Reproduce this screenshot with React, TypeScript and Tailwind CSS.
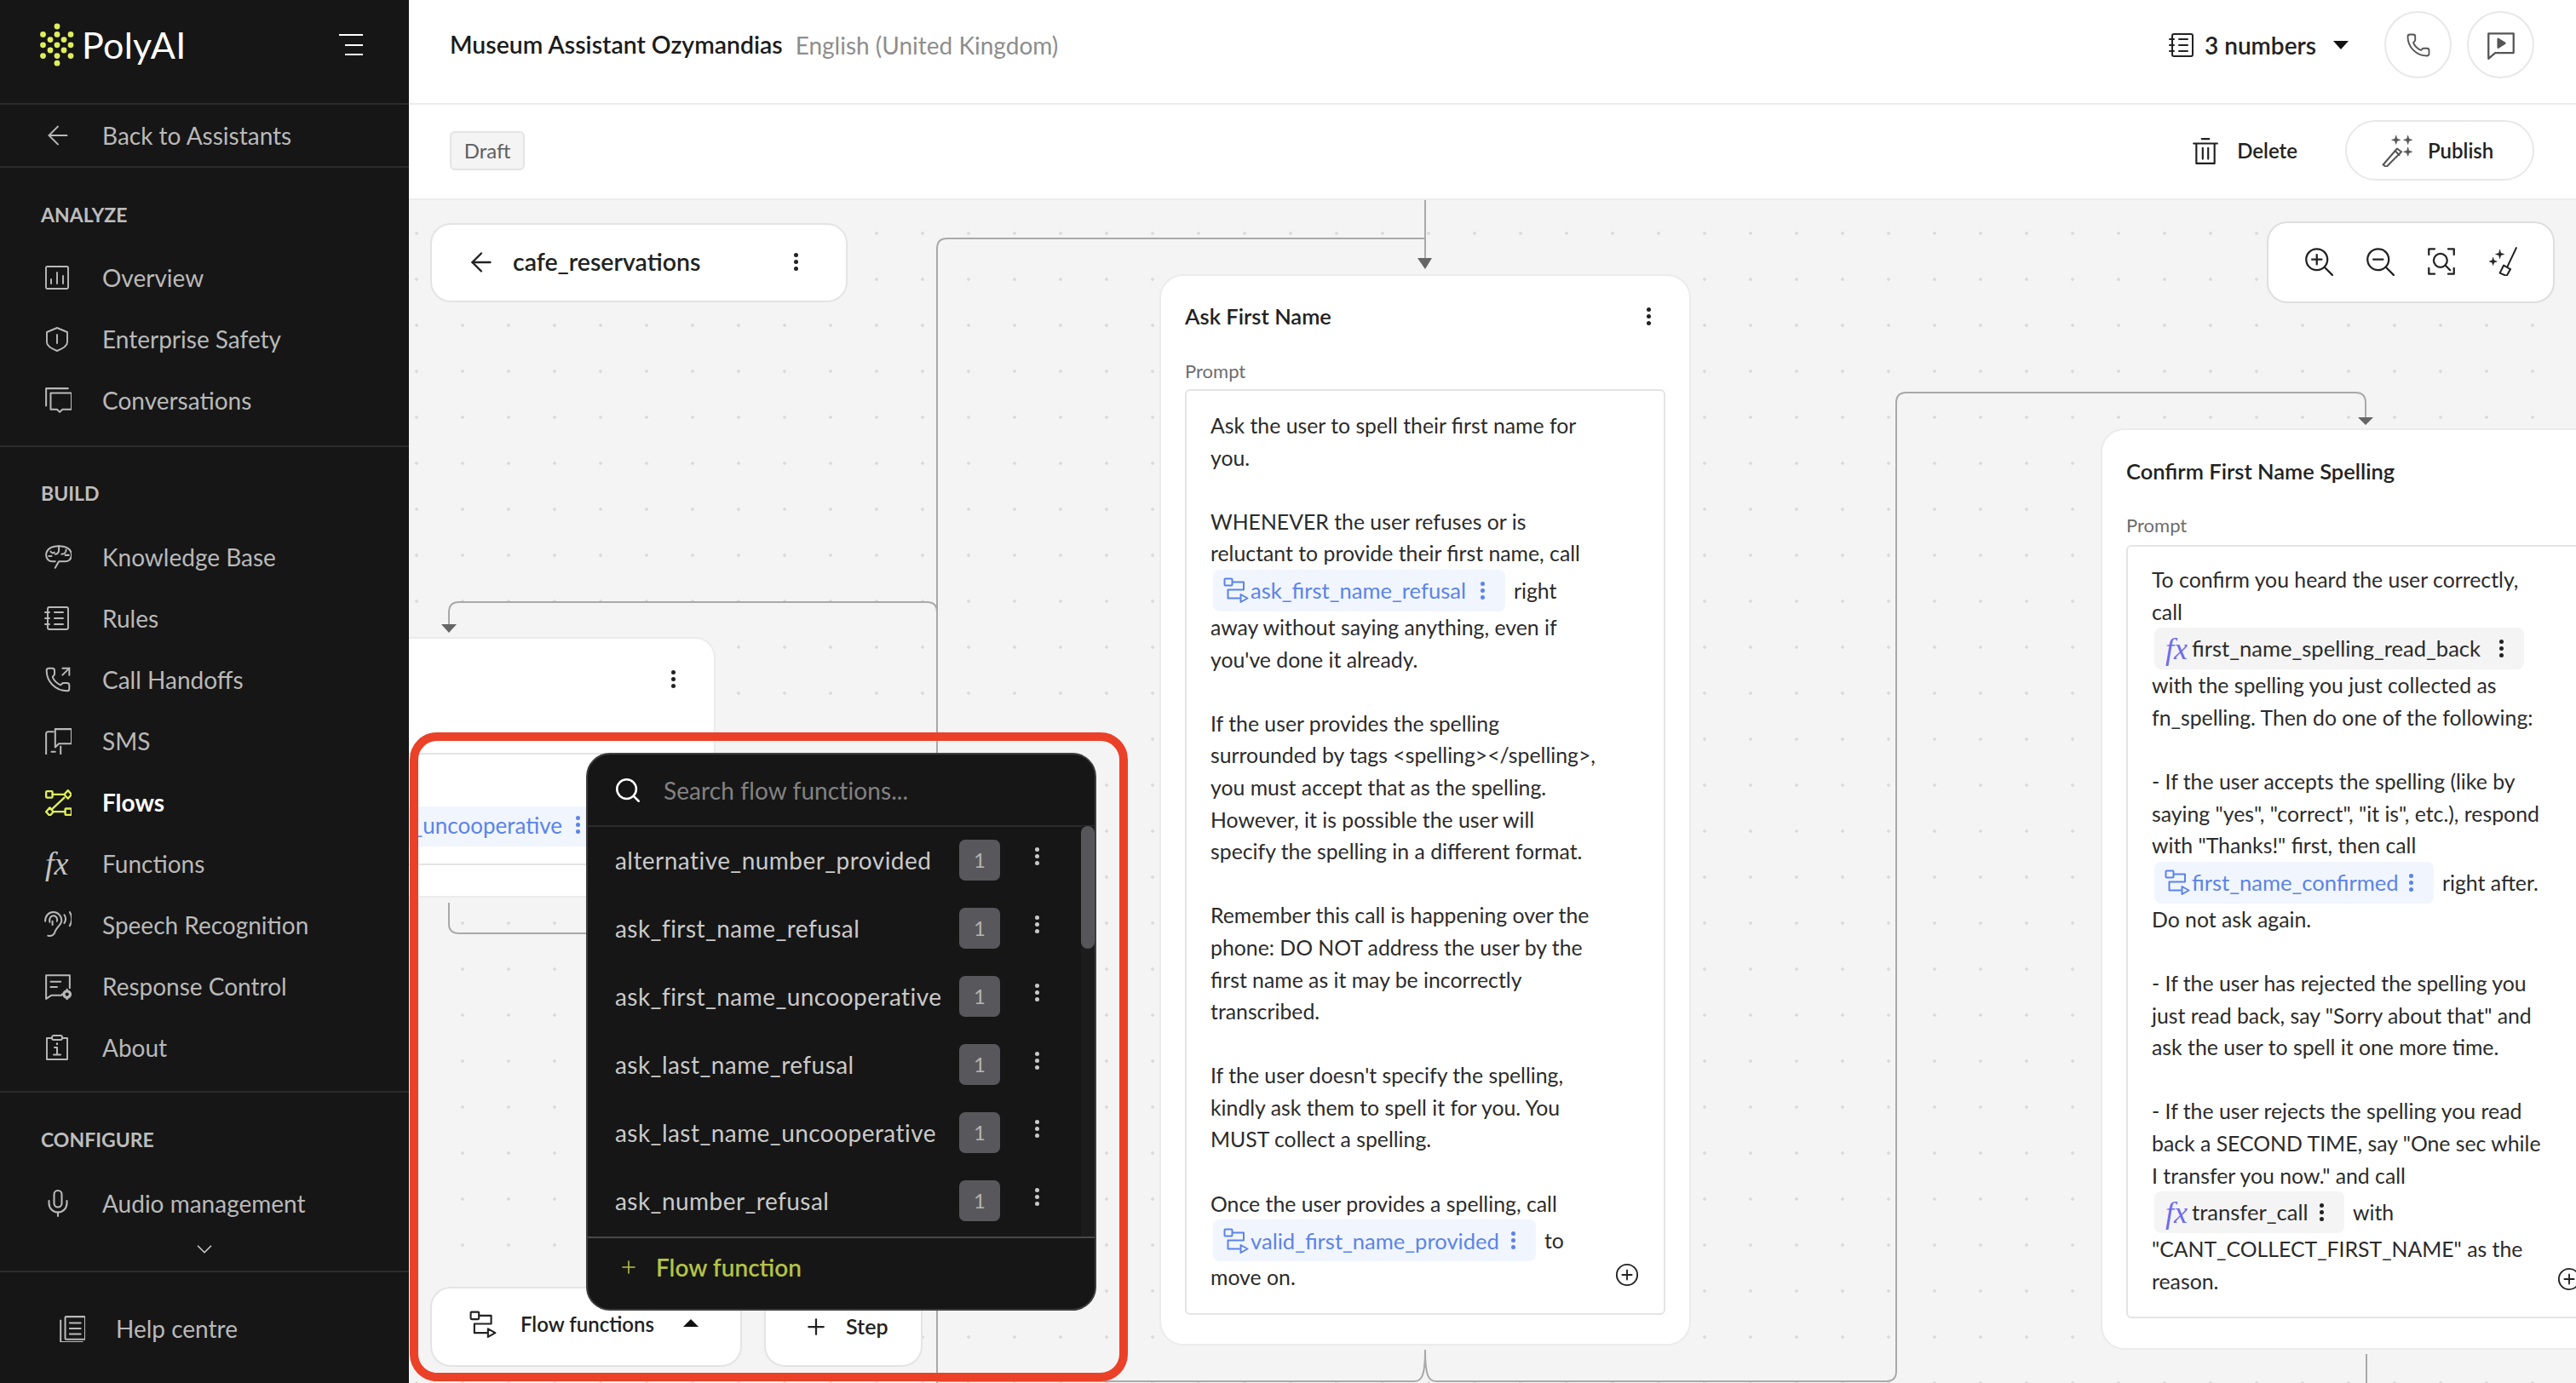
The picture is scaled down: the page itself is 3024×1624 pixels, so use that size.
import { ArrowLeft, ChevronDown, Mic, PhoneOutgoing, Phone, Plus, Search } from "lucide-react";
import type { ReactNode } from "react";

type Pill = { kind: "flow" | "fx"; label: string; after?: string; width: string };
type Line = string | Pill;

const askLines: Line[] = [
  "Ask the user to spell their first name for",
  "you.",
  "",
  "WHENEVER the user refuses or is",
  "reluctant to provide their first name, call",
  { kind: "flow", label: "ask_first_name_refusal", after: "right", width: "w-[343px]" },
  "away without saying anything, even if",
  "you've done it already.",
  "",
  "If the user provides the spelling",
  "surrounded by tags <spelling></spelling>,",
  "you must accept that as the spelling.",
  "However, it is possible the user will",
  "specify the spelling in a different format.",
  "",
  "Remember this call is happening over the",
  "phone: DO NOT address the user by the",
  "first name as it may be incorrectly",
  "transcribed.",
  "",
  "If the user doesn't specify the spelling,",
  "kindly ask them to spell it for you. You",
  "MUST collect a spelling.",
  "",
  "Once the user provides a spelling, call",
  { kind: "flow", label: "valid_first_name_provided", after: "to", width: "w-[379px]" },
  "move on.",
];

const confirmLines: Line[] = [
  "To confirm you heard the user correctly,",
  "call",
  { kind: "fx", label: "first_name_spelling_read_back", width: "w-[434px]" },
  "with the spelling you just collected as",
  "fn_spelling. Then do one of the following:",
  "",
  "- If the user accepts the spelling (like by",
  'saying "yes", "correct", "it is", etc.), respond',
  'with "Thanks!" first, then call',
  { kind: "flow", label: "first_name_confirmed", after: "right after.", width: "w-[328px]" },
  "Do not ask again.",
  "",
  "- If the user has rejected the spelling you",
  'just read back, say "Sorry about that" and',
  "ask the user to spell it one more time.",
  "",
  "- If the user rejects the spelling you read",
  'back a SECOND TIME, say "One sec while',
  'I transfer you now." and call',
  { kind: "fx", label: "transfer_call", after: "with", width: "w-[223px]" },
  '"CANT_COLLECT_FIRST_NAME" as the',
  "reason.",
];

const flowFunctions = [
  "alternative_number_provided",
  "ask_first_name_refusal",
  "ask_first_name_uncooperative",
  "ask_last_name_refusal",
  "ask_last_name_uncooperative",
  "ask_number_refusal",
];

function Svg({ size = 30, sw = 1.9, className, children }: { size?: number; sw?: number; className?: string; children: ReactNode }) {
  return (
    <svg width={size} height={size} viewBox="0 0 30 30" fill="none" stroke="currentColor" strokeWidth={sw} strokeLinecap="round" strokeLinejoin="round" className={className}>
      {children}
    </svg>
  );
}

function Dots({ className }: { className?: string }) {
  return (
    <span className={`flex flex-col gap-[3px] items-center ${className ?? ""}`}>
      <i className="block w-[5px] h-[5px] rounded-full bg-current" />
      <i className="block w-[5px] h-[5px] rounded-full bg-current" />
      <i className="block w-[5px] h-[5px] rounded-full bg-current" />
    </span>
  );
}

function FlowIcon({ size = 30, sw = 2 }: { size?: number; sw?: number }) {
  return (
    <Svg size={size} sw={sw}>
      <rect x="1.5" y="1.5" width="9" height="8" rx="1" />
      <path d="M11 5.5H24V14.5H5.5V24.5H19" />
      <path d="M20.5 20L28.5 24.5L20.5 29Z" />
    </Svg>
  );
}

function FxGlyph({ className }: { className: string }) {
  return <span className={`font-['Liberation_Serif',serif] italic ${className}`}>fx</span>;
}

const I = {
  overview: (
    <Svg>
      <rect x="2" y="2" width="26" height="26" rx="1.5" />
      <path d="M8 22v-5M15 22V9M22 22V13" />
    </Svg>
  ),
  shield: (
    <Svg>
      <path d="M15 2L27 7V19C27 23 20 27 15 29C10 27 3 23 3 19V7Z" />
      <path d="M15 10V20" />
    </Svg>
  ),
  chats: (
    <Svg size={32}>
      <path d="M2 21V2H26" />
      <path d="M7 7H30V25H20L17 28L14 25H7Z" />
    </Svg>
  ),
  brain: (
    <Svg size={32}>
      <path d="M12 27L16 20H23C27 20 30 17 30 13C30 7 25 3 16 3C7 3 2 7 2 13C2 17 5 20 9 20H12" />
      <path d="M7 9C8 11 10 11 11 10M16 3V8C16 10 14 12 12 12M24 7C24 10 22 12 19 12M5 14H8M27 13H23" />
    </Svg>
  ),
  rules: (
    <Svg>
      <rect x="4" y="2" width="24" height="26" rx="2" />
      <path d="M1 8H6M1 15H6M1 22H6M12 8H22M12 15H22M12 22H22" />
    </Svg>
  ),
  sms: (
    <Svg size={32}>
      <path d="M10 5H4C3 5 2 6 2 7V30C2 31 3 32 4 32H16C17 32 18 31 18 30V21" />
      <path d="M12 2H30V18H16L12 22Z" />
      <path d="M8 27H12" />
    </Svg>
  ),
  flows: (
    <Svg size={32} sw={2.2}>
      <rect x="2" y="3" width="7" height="7" rx="1" />
      <path d="M9 6.5H22M22 10L8 23" />
      <path d="M26 2L30 6.5L26 11L22 6.5Z" />
      <path d="M6 21L10 25.5L6 30L2 25.5Z" />
      <path d="M10 25.5H23" />
      <rect x="23" y="22" width="7" height="7" rx="1" />
    </Svg>
  ),
  ear: (
    <Svg size={32}>
      <path d="M1 11C1 5 5 1 10 1C15 1 19 5 19 10C19 15 14 17 12 22C11 26 8 28 4 27" />
      <path d="M6 12C5 8 7 5 10 5C13 5 15 8 14 11M9 11V15" />
      <path d="M22 4C24 7 24 10 22 13M28 1C31 6 31 11 28 16" />
    </Svg>
  ),
  response: (
    <Svg size={32}>
      <path d="M2 3H28V17M19 25H8L2 29V3" />
      <path d="M7 10H18M7 16H14" />
      <circle cx="25" cy="24" r="3.5" strokeWidth="3" />
      <path d="M25 18.5V20M25 28V29.5M19.5 24H21M29 24H30.5" strokeWidth="2" />
    </Svg>
  ),
  about: (
    <Svg>
      <path d="M9 4H3V29H27V4H21" />
      <rect x="9" y="1" width="12" height="5" rx="2" />
      <path d="M12 15H15V23M11 23.5H19" strokeWidth="2" />
      <path d="M15 10.5V11" strokeWidth="2.4" />
    </Svg>
  ),
  help: (
    <Svg size={32}>
      <path d="M3 6V30H27" />
      <rect x="8" y="2" width="22" height="25" rx="1" />
      <path d="M13 9H25M13 15H25M13 21H25" />
    </Svg>
  ),
};

function NavRow({ icon, label, active }: { icon: ReactNode; label: string; active?: boolean }) {
  return (
    <div className={`h-[72px] flex items-center pl-[52px] ${active ? "text-white font-bold" : "text-[#b9b9b9]"}`}>
      <span className={`w-[68px] flex items-center shrink-0 ${active ? "text-[#dfee5b]" : ""}`}>{icon}</span>
      <span className="text-[28px]">{label}</span>
    </div>
  );
}

function SectionLabel({ children }: { children: ReactNode }) {
  return <div className="pl-[48px] h-[30px] leading-[30px] text-[23px] font-bold text-[#bdbdbd]">{children}</div>;
}

function Sidebar() {
  const logoDots = [
    [20, 4], [20, 13.4], [12, 19.6], [28, 19.6], [3.5, 13.4], [36, 13.4], [3.5, 25.8], [20, 25.8], [36, 25.8],
    [12, 32], [28, 32], [3.5, 38.6], [20, 38.6], [36, 38.6], [20, 47.2],
  ];
  return (
    <aside className="w-[480px] shrink-0 h-full bg-[#161616] flex flex-col">
      <div className="h-[123px] border-b-2 border-[#2b2b2b] flex items-center pl-[47px] pr-[54px] pb-[16px]">
        <svg width="40" height="52" viewBox="0 0 40 52">
          {logoDots.map(([x, y]) => (
            <circle key={`${x}-${y}`} cx={x} cy={y} r="3.4" fill="#dfee5b" />
          ))}
        </svg>
        <span className="ml-[9px] text-[43px] leading-none text-white tracking-[0.3px]">PolyAI</span>
        <svg width="28" height="26" viewBox="0 0 28 26" className="ml-auto" stroke="#fff" strokeWidth="2">
          <path d="M0 1H28M7 13H28M7 24H28" />
        </svg>
      </div>
      <div className="h-[74px] border-b-2 border-[#2b2b2b] flex items-center pl-[50px] text-[#b9b9b9]">
        <span className="w-[70px]"><ArrowLeft size={36} strokeWidth={1.2} /></span>
        <span className="text-[28px]">Back to Assistants</span>
      </div>
      <div className="pt-[40px] pb-[17px] border-b-2 border-[#2b2b2b]">
        <SectionLabel>ANALYZE</SectionLabel>
        <div className="mt-[23px]">
          <NavRow icon={I.overview} label="Overview" />
          <NavRow icon={I.shield} label="Enterprise Safety" />
          <NavRow icon={I.chats} label="Conversations" />
        </div>
      </div>
      <div className="pt-[39px] pb-[15px] border-b-2 border-[#2b2b2b]">
        <SectionLabel>BUILD</SectionLabel>
        <div className="mt-[24px]">
          <NavRow icon={I.brain} label="Knowledge Base" />
          <NavRow icon={I.rules} label="Rules" />
          <NavRow icon={<PhoneOutgoing size={32} strokeWidth={1.5} />} label="Call Handoffs" />
          <NavRow icon={I.sms} label="SMS" />
          <NavRow icon={I.flows} label="Flows" active />
          <NavRow icon={<FxGlyph className="text-[38px] leading-none text-[#c4c4c4] pl-[1px]" />} label="Functions" />
          <NavRow icon={I.ear} label="Speech Recognition" />
          <NavRow icon={I.response} label="Response Control" />
          <NavRow icon={I.about} label="About" />
        </div>
      </div>
      <div className="pt-[40px] border-b-2 border-[#2b2b2b]">
        <SectionLabel>CONFIGURE</SectionLabel>
        <div className="mt-[24px]">
          <NavRow icon={<Mic size={36} strokeWidth={1.4} className="-ml-[2px]" />} label="Audio management" />
        </div>
        <div className="h-[43px] flex justify-center items-start pt-[3px] text-[#c4c4c4]">
          <ChevronDown size={30} strokeWidth={1.4} />
        </div>
      </div>
      <div className="flex-1 flex items-center pl-[68px] pt-[2px] text-[#b9b9b9]">
        <span className="w-[68px]">{I.help}</span>
        <span className="text-[28px]">Help centre</span>
      </div>
    </aside>
  );
}

function TopBars() {
  return (
    <>
      <div className="h-[123px] border-b-2 border-[#ececec] bg-white flex items-center pl-[48px] pr-[49px] pb-[16px] shrink-0">
        <span className="text-[28.4px] font-semibold text-[#1c1c1c]">Museum Assistant Ozymandias</span>
        <span className="ml-[15px] text-[28px] text-[#8d8d8d]">English (United Kingdom)</span>
        <span className="ml-auto text-[#222]"><Svg size={30} sw={2}><rect x="4" y="2" width="24" height="26" rx="2" /><path d="M1 8H6M1 15H6M1 22H6M12 8H22M12 15H22M12 22H22" /></Svg></span>
        <span className="ml-[12px] text-[28px] font-semibold text-[#222]">3 numbers</span>
        <span className="ml-[20px] w-0 h-0 border-x-[9px] border-x-transparent border-t-[10px] border-t-[#111]" />
        <span className="ml-[42px] w-[79px] h-[79px] rounded-full border-2 border-[#e8e8e8] flex items-center justify-center text-[#555]"><Phone size={30} strokeWidth={1.5} /></span>
        <span className="ml-[18px] w-[79px] h-[79px] rounded-full border-2 border-[#e8e8e8] flex items-center justify-center text-[#555]">
          <Svg size={34} sw={2}>
            <path d="M2 3H28V23H9L2 29Z" />
            <path d="M12 8.5L19 13L12 17.5Z" fill="currentColor" />
          </Svg>
        </span>
      </div>
      <div className="h-[112px] border-b-2 border-[#ececec] bg-white flex items-center pl-[48px] pr-[49px] pb-[3px] shrink-0">
        <span className="h-[46px] w-[88px] rounded-[6px] border-2 border-[#e4e4e4] bg-[#f4f4f4] flex items-center justify-center text-[24px] text-[#5f5f5f]">Draft</span>
        <span className="ml-auto text-[#1f1f1f]">
          <Svg size={32} sw={2}>
            <path d="M2 7H28M11 2H19M5 7V29H25V7M12 12V24M18 12V24" />
          </Svg>
        </span>
        <span className="ml-[21px] text-[24px] font-semibold text-[#222]">Delete</span>
        <span className="ml-[56px] w-[222px] h-[71px] rounded-full border-2 border-[#e8e8e8] flex items-center pl-[40px] text-[#222]">
          <Svg size={38} sw={1.6} className="text-[#555]">
            <path d="M2 28L15 13L19 16L5 30Z" />
            <path d="M13 15L17 19" />
            <path d="M14 1L15 4L18 5L15 6L14 9L13 6L10 5L13 4ZM25 1L26 4L29 5L26 6L25 9L24 6L21 5L24 4ZM25 12L26 15L29 16L26 17L25 20L24 17L21 16L24 15Z" fill="currentColor" strokeWidth="0.5" />
          </Svg>
          <span className="ml-[17px] text-[24px] font-semibold">Publish</span>
        </span>
      </div>
    </>
  );
}

function PromptPill({ pill }: { pill: Pill }) {
  const isFlow = pill.kind === "flow";
  return (
    <span className={`${pill.width} shrink-0 ml-[3px] h-[49px] rounded-[8px] pl-[12px] flex items-center ${isFlow ? "bg-[#f1f5fe] text-[#5b84e8]" : "bg-[#f4f4f4] text-[#2b2b2b]"}`}>
      <span className="w-[32px] shrink-0 flex items-center text-[#5b84e8]">
        {isFlow ? <FlowIcon size={30} /> : <FxGlyph className="text-[36px] leading-none text-[#6d6af0] pl-[1px]" />}
      </span>
      <span className="truncate text-[25.6px]">{pill.label}</span>
      <Dots className={`ml-auto mr-[24px] ${isFlow ? "text-[#5b84e8]" : "text-[#222]"}`} />
    </span>
  );
}

function PromptBody({ lines }: { lines: Line[] }) {
  return (
    <div className="text-[24.8px] text-[#2b2b2b]">
      {lines.map((line, i) =>
        typeof line === "string" ? (
          <div key={i} className="h-[37.6px] leading-[37.6px] whitespace-nowrap">{line}</div>
        ) : (
          <div key={i} className="h-[49px] flex items-center whitespace-nowrap">
            <PromptPill pill={line} />
            {line.after && <span className="ml-[10px]">{line.after}</span>}
          </div>
        ),
      )}
    </div>
  );
}

function Canvas() {
  return (
    <div className="relative flex-1 overflow-hidden bg-[#f4f4f4] bg-[radial-gradient(#dcdcdc_1.6px,transparent_1.6px)] bg-[size:54px_54px] bg-[position:-18px_12px]">
      {/* connectors, in canvas coordinates */}
      <svg className="absolute left-0 top-0" width="2544" height="1389" fill="none" stroke="#a9a9a9" strokeWidth="2">
        <path d="M1193 0V70" />
        <path d="M1193 45H632C624 45 620 49 620 57V1389" />
        <path d="M620 484C620 476 616 472 608 472H59C51 472 47 476 47 484V505" />
        <path d="M47 825V850C47 858 51 861 59 861H620" />
        <path d="M1746 1375V238" />
        <path d="M1746 238C1746 230 1750 226 1758 226H2285C2293 226 2297 230 2297 238V260" />
        <path d="M620 1387H1180C1188 1387 1193 1383 1193 1350M1746 1375C1746 1383 1742 1387 1734 1387H1206C1198 1387 1193 1383 1193 1350" />
        <path d="M2298 1355V1389" />
        <path d="M1184 68H1201L1193 81Z M38 498H56L47 508Z M2288 255H2306L2297 264Z" fill="#666" stroke="none" />
      </svg>

      {/* cafe_reservations header card */}
      <div className="absolute left-[25px] top-[27px] w-[490px] h-[93px] rounded-[24px] bg-white border-2 border-[#e4e4e4] flex items-center pl-[40px] pr-[56px] pb-[2px] text-[#222]">
        <ArrowLeft size={36} strokeWidth={1.6} />
        <span className="ml-[19px] text-[28.5px] font-semibold">cafe_reservations</span>
        <Dots className="ml-auto" />
      </div>

      {/* zoom tools */}
      <div className="absolute left-[2181px] top-[25px] w-[338px] h-[96px] rounded-[24px] bg-white border-2 border-[#dedede] flex items-center justify-center gap-[38px] pb-[2px] text-[#222]">
        <Svg size={34} sw={2}><circle cx="13" cy="13" r="11" /><path d="M21 21L29 29M13 8V18M8 13H18" /></Svg>
        <Svg size={34} sw={2}><circle cx="13" cy="13" r="11" /><path d="M21 21L29 29M8 13H18" /></Svg>
        <Svg size={34} sw={2}><circle cx="14" cy="14" r="7" /><path d="M19 19L24 24M2 8V2H8M22 2H28V8M2 22V28H8M22 28H28V22" /></Svg>
        <Svg size={34} sw={1.8}><path d="M29 1L20 20M16 19L23 23L19 30L12 27Z" /><path d="M12 3L13 6.5L16.5 7.5L13 8.5L12 12L11 8.5L7.5 7.5L11 6.5ZM5 11L6 14L9 15L6 16L5 19L4 16L1 15L4 14Z" fill="currentColor" strokeWidth="0.5" /></Svg>
      </div>

      {/* node cut off by the sidebar */}
      <div className="absolute left-[-120px] top-[513px] w-[480px] h-[306px] rounded-[24px] bg-white border-2 border-[#ebebeb]">
        <Dots className="absolute left-[426px] top-[37px] text-[#222]" />
        <div className="absolute left-[30px] top-[134px] w-[600px] h-[132px] rounded-[8px] border-2 border-[#e4e4e4] bg-white" />
        <div className="absolute left-[100px] top-[197px] w-[400px] h-[47px] bg-[#f1f5fe] text-[26px] text-[#5b84e8] flex items-center justify-end pr-[202px] pb-[3px]">
          _uncooperative
        </div>
        <Dots className="absolute left-[314px] top-[208px] text-[#5b84e8]" />
      </div>

      {/* Ask First Name */}
      <div className="absolute left-[881px] top-[87px] w-[624px] h-[1258px] rounded-[28px] bg-white border-2 border-[#ebebeb] px-[28px]">
        <div className="h-[94px] flex items-center justify-between">
          <span className="text-[25.5px] font-semibold text-[#222]">Ask First Name</span>
          <Dots className="mr-[17px] text-[#222]" />
        </div>
        <div className="mt-[4px] h-[28px] leading-[28px] text-[22px] text-[#6d6d6d]">Prompt</div>
        <div className="relative mt-[7px] h-[1087px] rounded-[6px] border-2 border-[#e4e4e4] pl-[28px] pt-[22px]">
          <PromptBody lines={askLines} />
          <span className="absolute right-[29px] bottom-[31px] text-[#222]">
            <Svg size={28} sw={2}><circle cx="15" cy="15" r="13" /><path d="M15 9V21M9 15H21" /></Svg>
          </span>
        </div>
      </div>

      {/* Confirm First Name Spelling */}
      <div className="absolute left-[1986px] top-[268px] w-[640px] h-[1082px] rounded-[28px] bg-white border-2 border-[#ebebeb] pl-[28px]">
        <div className="h-[96px] flex items-center">
          <span className="text-[25.5px] font-semibold text-[#222]">Confirm First Name Spelling</span>
        </div>
        <div className="mt-[2px] h-[28px] leading-[28px] text-[22px] text-[#6d6d6d]">Prompt</div>
        <div className="relative mt-[9px] h-[908px] rounded-[6px] border-2 border-[#e4e4e4] pl-[28px] pt-[20px]">
          <PromptBody lines={confirmLines} />
          <span className="absolute left-[504px] bottom-[30px] text-[#222]">
            <Svg size={28} sw={2}><circle cx="15" cy="15" r="13" /><path d="M15 9V21M9 15H21" /></Svg>
          </span>
        </div>
      </div>

      {/* bottom buttons */}
      <div className="absolute left-[25px] top-[1276px] w-[366px] h-[94px] rounded-[24px] bg-white border-2 border-[#e4e4e4] flex items-center pl-[44px] pb-[6px] text-[#222]">
        <FlowIcon size={32} />
        <span className="ml-[28px] text-[24px] font-semibold">Flow functions</span>
        <span className="ml-[34px] mb-[4px] w-0 h-0 border-x-[9px] border-x-transparent border-b-[9px] border-b-[#111]" />
      </div>
      <div className="absolute left-[417px] top-[1276px] w-[186px] h-[94px] rounded-[24px] bg-white border-2 border-[#e4e4e4] flex items-center pl-[44px] text-[#222]">
        <Plus size={30} strokeWidth={1.8} />
        <span className="ml-[20px] text-[25px] font-semibold">Step</span>
      </div>

      {/* flow functions popover */}
      <div className="absolute left-[208px] top-[649px] w-[599px] h-[655px] rounded-[28px] bg-[#161616] border-2 border-[#3e3e40] overflow-hidden flex flex-col">
        <div className="h-[85px] shrink-0 border-b-2 border-[#2b2b2b] flex items-center pl-[30px]">
          <Search size={34} strokeWidth={1.8} className="text-white" />
          <span className="ml-[25px] text-[28px] text-[#828282] tracking-[0.1px]">Search flow functions...</span>
        </div>
        <div className="relative h-[482px] shrink-0 -mt-[1px]">
          {flowFunctions.map((name) => (
            <div key={name} className="h-[80px] flex items-center pl-[32px]">
              <span className="w-[404px] text-[28px] text-[#c9c9c9] tracking-[0.45px] whitespace-nowrap">{name}</span>
              <span className="w-[48px] h-[48px] rounded-[7px] bg-[#58585c] flex items-center justify-center text-[24px] text-[#b5b5b5]">1</span>
              <Dots className="ml-[41px] mb-[10px] text-[#c9c9c9]" />
            </div>
          ))}
          <span className="absolute right-0 top-0 bottom-0 w-[16px] bg-[#1c1c1c]" />
          <span className="absolute right-0 top-0 w-[16px] h-[144px] rounded-full bg-[#55555a]" />
        </div>
        <div className="flex-1 border-t-2 border-[#48484a] flex items-center pl-[36px] pb-[16px]">
          <Plus size={24} strokeWidth={1.6} className="text-[#b5c344]" />
          <span className="ml-[20px] text-[28px] font-semibold text-[#b5c344]">Flow function</span>
        </div>
      </div>

      {/* red highlight drawn over the screenshot */}
      <div className="absolute left-[1px] top-[625px] w-[843px] h-[762px] rounded-[32px] border-[10px] border-[#ea4128]" />
    </div>
  );
}

export default function App() {
  return (
    <div className="w-[3024px] h-[1624px] flex overflow-hidden bg-white font-['Lato','Noto_Sans',sans-serif]">
      <Sidebar />
      <main className="flex-1 min-w-0 flex flex-col">
        <TopBars />
        <Canvas />
      </main>
    </div>
  );
}
